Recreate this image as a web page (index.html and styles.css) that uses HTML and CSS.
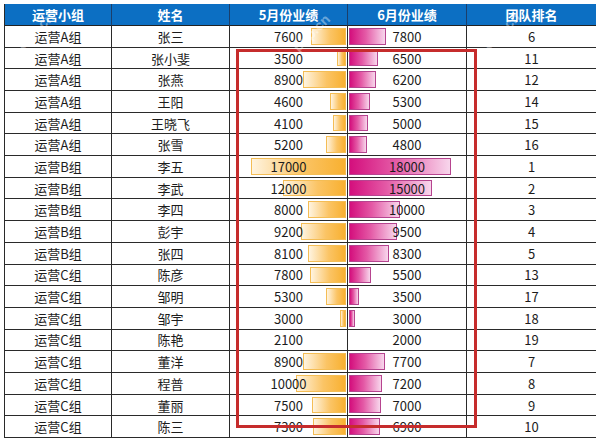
FILE: index.html
```html
<!DOCTYPE html>
<html lang="zh">
<head>
<meta charset="utf-8">
<title>运营业绩</title>
<link rel="stylesheet" href="styles.css">
</head>
<body>
<div class="sheet">
  <div class="grid">
    <div class="cell head">运营小组</div>
    <div class="cell head">姓名</div>
    <div class="cell head">5月份业绩</div>
    <div class="cell head">6月份业绩</div>
    <div class="cell head">团队排名</div>

    <div class="cell">运营A组</div><div class="cell">张三</div>
    <div class="cell may"><span class="bar bar-may" style="width:35px"></span><span class="val">7600</span></div>
    <div class="cell jun"><span class="bar bar-jun" style="width:37px"></span><span class="val">7800</span></div>
    <div class="cell">6</div>

    <div class="cell">运营A组</div><div class="cell">张小斐</div>
    <div class="cell may"><span class="bar bar-may" style="width:9px"></span><span class="val">3500</span></div>
    <div class="cell jun"><span class="bar bar-jun" style="width:29px"></span><span class="val">6500</span></div>
    <div class="cell">11</div>

    <div class="cell">运营A组</div><div class="cell">张燕</div>
    <div class="cell may"><span class="bar bar-may" style="width:43px"></span><span class="val">8900</span></div>
    <div class="cell jun"><span class="bar bar-jun" style="width:27px"></span><span class="val">6200</span></div>
    <div class="cell">12</div>

    <div class="cell">运营A组</div><div class="cell">王阳</div>
    <div class="cell may"><span class="bar bar-may" style="width:16px"></span><span class="val">4600</span></div>
    <div class="cell jun"><span class="bar bar-jun" style="width:21px"></span><span class="val">5300</span></div>
    <div class="cell">14</div>

    <div class="cell">运营A组</div><div class="cell">王晓飞</div>
    <div class="cell may"><span class="bar bar-may" style="width:13px"></span><span class="val">4100</span></div>
    <div class="cell jun"><span class="bar bar-jun" style="width:19px"></span><span class="val">5000</span></div>
    <div class="cell">15</div>

    <div class="cell">运营A组</div><div class="cell">张雪</div>
    <div class="cell may"><span class="bar bar-may" style="width:20px"></span><span class="val">5200</span></div>
    <div class="cell jun"><span class="bar bar-jun" style="width:18px"></span><span class="val">4800</span></div>
    <div class="cell">16</div>

    <div class="cell">运营B组</div><div class="cell">李五</div>
    <div class="cell may"><span class="bar bar-may" style="width:95px"></span><span class="val">17000</span></div>
    <div class="cell jun"><span class="bar bar-jun" style="width:102px"></span><span class="val">18000</span></div>
    <div class="cell">1</div>

    <div class="cell">运营B组</div><div class="cell">李武</div>
    <div class="cell may"><span class="bar bar-may" style="width:63px"></span><span class="val">12000</span></div>
    <div class="cell jun"><span class="bar bar-jun" style="width:83px"></span><span class="val">15000</span></div>
    <div class="cell">2</div>

    <div class="cell">运营B组</div><div class="cell">李四</div>
    <div class="cell may"><span class="bar bar-may" style="width:38px"></span><span class="val">8000</span></div>
    <div class="cell jun"><span class="bar bar-jun" style="width:51px"></span><span class="val">10000</span></div>
    <div class="cell">3</div>

    <div class="cell">运营B组</div><div class="cell">彭宇</div>
    <div class="cell may"><span class="bar bar-may" style="width:45px"></span><span class="val">9200</span></div>
    <div class="cell jun"><span class="bar bar-jun" style="width:48px"></span><span class="val">9500</span></div>
    <div class="cell">4</div>

    <div class="cell">运营B组</div><div class="cell">张四</div>
    <div class="cell may"><span class="bar bar-may" style="width:38px"></span><span class="val">8100</span></div>
    <div class="cell jun"><span class="bar bar-jun" style="width:40px"></span><span class="val">8300</span></div>
    <div class="cell">5</div>

    <div class="cell">运营C组</div><div class="cell">陈彦</div>
    <div class="cell may"><span class="bar bar-may" style="width:36px"></span><span class="val">7800</span></div>
    <div class="cell jun"><span class="bar bar-jun" style="width:22px"></span><span class="val">5500</span></div>
    <div class="cell">13</div>

    <div class="cell">运营C组</div><div class="cell">邹明</div>
    <div class="cell may"><span class="bar bar-may" style="width:20px"></span><span class="val">5300</span></div>
    <div class="cell jun"><span class="bar bar-jun" style="width:10px"></span><span class="val">3500</span></div>
    <div class="cell">17</div>

    <div class="cell">运营C组</div><div class="cell">邹宇</div>
    <div class="cell may"><span class="bar bar-may" style="width:6px"></span><span class="val">3000</span></div>
    <div class="cell jun"><span class="bar bar-jun" style="width:6px"></span><span class="val">3000</span></div>
    <div class="cell">18</div>

    <div class="cell">运营C组</div><div class="cell">陈艳</div>
    <div class="cell may"><span class="val">2100</span></div>
    <div class="cell jun"><span class="val">2000</span></div>
    <div class="cell">19</div>

    <div class="cell">运营C组</div><div class="cell">董洋</div>
    <div class="cell may"><span class="bar bar-may" style="width:43px"></span><span class="val">8900</span></div>
    <div class="cell jun"><span class="bar bar-jun" style="width:36px"></span><span class="val">7700</span></div>
    <div class="cell">7</div>

    <div class="cell">运营C组</div><div class="cell">程普</div>
    <div class="cell may"><span class="bar bar-may" style="width:50px"></span><span class="val">10000</span></div>
    <div class="cell jun"><span class="bar bar-jun" style="width:33px"></span><span class="val">7200</span></div>
    <div class="cell">8</div>

    <div class="cell">运营C组</div><div class="cell">董丽</div>
    <div class="cell may"><span class="bar bar-may" style="width:34px"></span><span class="val">7500</span></div>
    <div class="cell jun"><span class="bar bar-jun" style="width:32px"></span><span class="val">7000</span></div>
    <div class="cell">9</div>

    <div class="cell">运营C组</div><div class="cell">陈三</div>
    <div class="cell may"><span class="bar bar-may" style="width:33px"></span><span class="val">7300</span></div>
    <div class="cell jun"><span class="bar bar-jun" style="width:31px"></span><span class="val">6900</span></div>
    <div class="cell">10</div>
  </div>

  <div class="highlight"></div>
  <span class="wm wm1">php.cn</span>
  <span class="wm wm2">php.cn</span>
  <span class="wm wm3">php.cn</span>
</div>
</body>
</html>
```

FILE: styles.css
```css
html, body {
  margin: 0;
  padding: 0;
  background: #ffffff;
}

.sheet {
  position: relative;
  width: 592px;
  margin: 4.3px 0 0 4px;
  overflow: hidden;
  font-family: "Noto Sans CJK SC", "Microsoft YaHei", sans-serif;
  font-size: 13px;
  color: #1c1c1c;
}

.grid {
  display: grid;
  grid-template-columns: 107px 118px 118px 119px 130px;
  grid-auto-rows: 21.7px;
  border-left: 1px solid #2a2a2a;
}

.cell {
  position: relative;
  box-sizing: border-box;
  display: flex;
  align-items: center;
  justify-content: center;
  border-right: 1px solid #2a2a2a;
  border-bottom: 1px solid #2a2a2a;
  line-height: 1;
  white-space: nowrap;
}

.head {
  background: #0c6fc3;
  color: #ffffff;
  font-weight: bold;
  border-right-color: #1b3f6b;
  border-bottom-color: #222222;
}

.val {
  position: relative;
  z-index: 1;
}

.bar {
  position: absolute;
  top: 2px;
  bottom: 2px;
  box-sizing: border-box;
}

.bar-may {
  right: 1px;
  border: 1px solid #f4bd55;
  background: linear-gradient(to right, #fff4e0, #fbc465 55%, #f8b030);
}

.bar-jun {
  left: 1px;
  border: 1px solid #b6448f;
  background: linear-gradient(to right, #d40f7d, #e45aa6 45%, #f8d6ec);
}

.highlight {
  position: absolute;
  left: 232px;
  top: 44.7px;
  width: 241px;
  height: 379px;
  box-sizing: border-box;
  border: 3px solid #c62c2c;
  z-index: 2;
}

.wm {
  position: absolute;
  z-index: 3;
  font-family: "Liberation Sans", sans-serif;
  font-weight: bold;
  font-size: 14px;
  line-height: 14px;
  color: rgba(255, 255, 255, 0.4);
  transform: rotate(-45deg);
  transform-origin: left bottom;
  pointer-events: none;
}

.wm1 { left: 20px; top: 34px; }
.wm2 { left: 296px; top: 36px; }
.wm3 { left: 486px; top: 34px; }
```
